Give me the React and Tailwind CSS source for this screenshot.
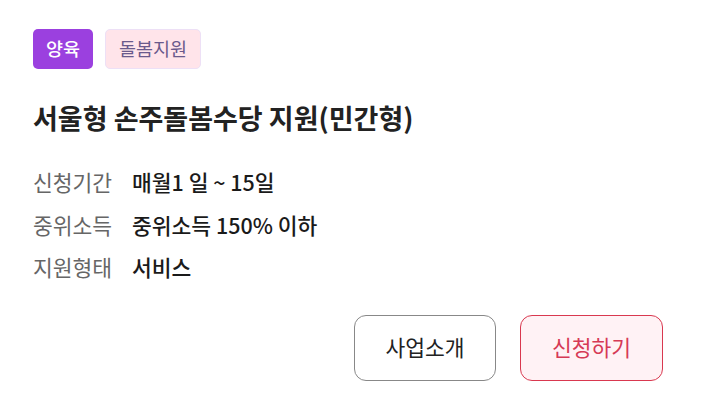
import React from "react";

const rows = [
  ["신청기간", "매월1 일 ~ 15일"],
  ["중위소득", "중위소득 150% 이하"],
  ["지원형태", "서비스"],
];

export default function App() {
  return (
    <div
      className="w-[702px] h-[416px] bg-white px-[33px] pt-[29px]"
      style={{ fontFamily: '"Noto Sans CJK KR", "Noto Sans", sans-serif' }}
    >
      <div className="flex gap-[12px]">
        <span className="h-[40px] px-[13px] flex items-center rounded-[5px] bg-[#9b40df] text-white text-[18.5px] font-medium">
          양육
        </span>
        <span className="h-[40px] px-[13px] flex items-center rounded-[5px] bg-[#ffe4ea] border border-[#ede0f6] text-[#6a5a8c] text-[18.5px]">
          돌봄지원
        </span>
      </div>

      <h1 className="mt-[31px] text-[27px] font-bold text-[#222] leading-[36px]">
        서울형 손주돌봄수당 지원(민간형)
      </h1>

      <div className="mt-[25px] flex flex-col">
        {rows.map(([k, v]) => (
          <div key={k} className="flex h-[42.5px] items-center">
            <span className="w-[99px] text-[#666] text-[21.5px]">{k}</span>
            <span className="text-[#1a1a1a] text-[21.5px] font-medium">{v}</span>
          </div>
        ))}
      </div>

      <div className="mt-[26px] flex justify-end gap-[24px] pr-[6px]">
        <button className="w-[142px] h-[66px] rounded-[12px] border border-[#888] bg-white text-[21.5px] text-[#222]">
          사업소개
        </button>
        <button className="w-[143px] h-[66px] rounded-[12px] border border-[#d9384f] bg-[#fff2f5] text-[21.5px] text-[#d63a55]">
          신청하기
        </button>
      </div>
    </div>
  );
}
